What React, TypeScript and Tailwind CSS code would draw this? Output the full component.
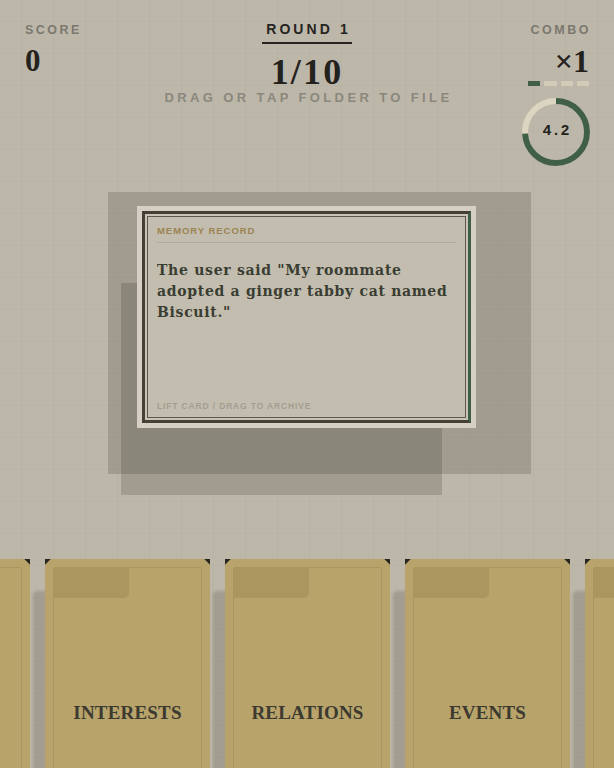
import React from 'react';

const folders = ['', 'INTERESTS', 'RELATIONS', 'EVENTS', ''];

function TimerRing({ value, progress }: { value: string; progress: number }) {
  const r = 31;
  const c = 2 * Math.PI * r;
  return (
    <div className="relative w-[70px] h-[70px]">
      <svg width="70" height="70" viewBox="0 0 70 70" className="absolute inset-0">
        <circle cx="35" cy="35" r={r} fill="none" stroke="#dcd6c0" strokeWidth="6" />
        <circle
          cx="35"
          cy="35"
          r={r}
          fill="none"
          stroke="#405f46"
          strokeWidth="6"
          strokeDasharray={`${c * progress} ${c}`}
          transform="rotate(-90 35 35)"
        />
      </svg>
      <div className="absolute inset-0 flex items-center justify-center font-['Liberation_Mono',monospace] font-bold text-[15px] text-[#24221d]">
        {value}
      </div>
    </div>
  );
}

function Folder({ label }: { label: string }) {
  return (
    <div className="relative shrink-0 w-[165px] h-[240px] bg-[#b8a46b] rounded-[4px] p-[8px] shadow-[-12px_32px_3px_rgba(60,55,45,0.2)]">
      <span className="absolute top-0 left-0 w-[6px] h-[6px] bg-[#26261f] [clip-path:polygon(0_0,100%_0,0_100%)]" />
      <span className="absolute top-0 right-0 w-[6px] h-[6px] bg-[#26261f] [clip-path:polygon(0_0,100%_0,100%_100%)]" />
      <div className="h-full border border-[#a8955f] rounded-[2px] flex flex-col items-center">
        <div className="self-start w-[75px] h-[30px] bg-[#ab9660] rounded-br-[5px] rounded-tl-[2px]" />
        {label && (
          <div className="mt-[101px] font-['Liberation_Serif',serif] font-bold text-[19px] text-[#3c3a30] tracking-[0.01em]">
            {label}
          </div>
        )}
      </div>
    </div>
  );
}

export default function App() {
  return (
    <div className="w-[614px] h-[768px] overflow-hidden bg-[#bdb7aa] bg-[linear-gradient(rgba(0,0,0,0.025)_1px,transparent_1px),linear-gradient(90deg,rgba(0,0,0,0.025)_1px,transparent_1px)] bg-[size:32px_32px] bg-[position:21px_21px] flex flex-col font-['Liberation_Sans',sans-serif]">
      {/* header */}
      <div className="relative flex justify-between items-start px-[25px] pt-[21px] h-[174px]">
        <div className="flex flex-col">
          <span className="text-[12.5px] font-bold tracking-[0.2em] text-[#7b786e]">SCORE</span>
          <span className="mt-[4px] font-['Liberation_Serif',serif] font-bold text-[31px] leading-[34px] text-[#24221d]">0</span>
        </div>

        <div className="absolute left-0 right-0 top-[21px] flex flex-col items-center">
          <span className="text-[14px] leading-[17px] font-bold tracking-[0.22em] text-[#26241f] pl-[3px] pb-[4px] border-b-2 border-[#26241f] w-[90px] text-center">
            ROUND 1
          </span>
          <span className="mt-[11px] font-['Liberation_Serif',serif] font-bold text-[36px] leading-[34px] tracking-[0.06em] text-[#24221d]">
            1/10
          </span>
          <span className="-mt-[1px] text-[13px] font-bold tracking-[0.26em] text-[#8a877c] pl-[3px]">DRAG OR TAP FOLDER TO FILE</span>
        </div>

        <div className="flex flex-col items-end">
          <span className="text-[12.5px] font-bold tracking-[0.2em] text-[#7b786e] -mr-[2px]">COMBO</span>
          <span className="mt-[8px] font-['Liberation_Serif',serif] font-bold text-[32px] leading-[26px] text-[#24221d]">×1</span>
          <div className="mt-[7px] flex gap-[4px]">
            <span className="w-[12px] h-[5px] bg-[#405f46]" />
            <span className="w-[13px] h-[5px] bg-[#d6d0ba] opacity-80" />
            <span className="w-[12px] h-[5px] bg-[#d6d0ba] opacity-80" />
            <span className="w-[12px] h-[5px] bg-[#d6d0ba] opacity-80" />
          </div>
          <div className="mt-[11px] -mr-[2px]">
            <TimerRing value="4.2" progress={0.74} />
          </div>
        </div>
      </div>

      {/* card stack */}
      <div className="flex justify-center mt-[39px] pr-[1px]">
        <div className="relative w-[339px] h-[222px]">
          <div className="absolute -left-[29px] -top-[14px] w-[423px] h-[282px] bg-[rgba(50,48,35,0.2)]" />
          <div className="absolute -left-[16px] top-[77px] w-[321px] h-[212px] bg-[rgba(50,48,35,0.2)]" />
          <div className="relative h-full bg-[#d5d0c3] p-[5px]">
            <div className="h-full border-[3px] border-[#444036] border-r-[#3f5e45] p-[2px] bg-[#c8c2b5]">
              <div className="h-full border border-[#5d584b] bg-[#c3bdb0] px-[9px] pt-[7px] pb-[4px] flex flex-col">
                <span className="text-[9.5px] font-bold tracking-[0.1em] text-[#9b8451]">MEMORY RECORD</span>
                <div className="mt-[4px] border-t border-[#b1ab9d]" />
                <p className="mt-[17px] font-['DejaVu_Serif',serif] font-bold text-[14px] leading-[21px] tracking-[0.05em] text-[#3a3d32]">
                  The user said "My roommate adopted a ginger tabby cat named Biscuit."
                </p>
                <span className="mt-auto text-[8.5px] font-bold tracking-[0.1em] text-[#a29d90]">LIFT CARD / DRAG TO ARCHIVE</span>
              </div>
            </div>
          </div>
        </div>
      </div>

      {/* folders */}
      <div className="mt-[131px] flex justify-center gap-[15px] pl-[1px]">
        {folders.map((f, i) => (
          <Folder key={i} label={f} />
        ))}
      </div>
    </div>
  );
}
